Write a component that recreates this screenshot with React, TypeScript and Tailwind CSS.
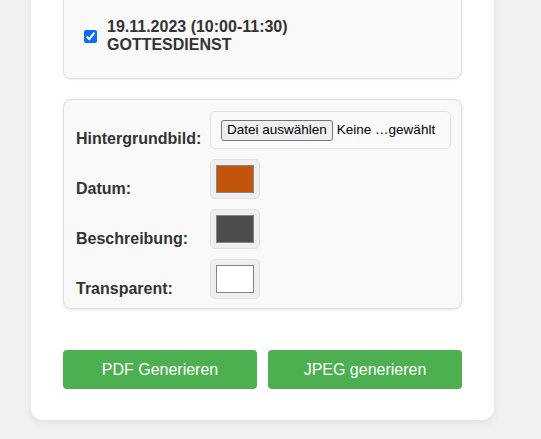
import React from 'react'

const font = { fontFamily: '"Liberation Sans", Arial, sans-serif' }

interface SwatchProps {
    color: string
}

function ColorSwatch({ color }: SwatchProps) {
    return (
        <div className="w-[50px] h-[40px] p-[5px] bg-[#efefef] border border-[#e2e2e2] rounded-[5px]">
            <div className={`w-full h-full border border-[#858585] ${color}`}></div>
        </div>
    )
}

const rows = [
    { label: 'Datum:', color: 'bg-[#c2540c]' },
    { label: 'Beschreibung:', color: 'bg-[#4d4d4d]' },
    { label: 'Transparent:', color: 'bg-white' },
]

export default function App() {
    return (
        <div className="w-[541px] h-[439px] overflow-hidden bg-[#f0f1f1] text-[#333]" style={font}>
            <div className="ml-[31px] w-[463px] -mt-[60px] bg-white rounded-xl shadow-[0_2px_8px_rgba(0,0,0,0.08)] px-8 pt-8 pb-[31px]">
                {/* Event list */}
                <div className="bg-[#f9f9f9] border border-[#dedede] rounded-lg shadow-[0_1px_2px_rgba(0,0,0,0.06)] pl-5 pr-5 pt-[45px] pb-[24px]">
                    <label className="flex items-center gap-[10px]">
                        <input type="checkbox" checked readOnly className="w-[13px] h-[13px] accent-[#0a6cff]" />
                        <span className="text-base font-bold leading-[18px]">
                            19.11.2023 (10:00-11:30)
                            <br />
                            GOTTESDIENST
                        </span>
                    </label>
                </div>

                {/* Settings */}
                <div className="mt-[20px] w-[399px] bg-[#f9f9f9] border border-[#dedede] rounded-lg shadow-[0_1px_3px_rgba(0,0,0,0.1)] pl-3 pr-[10px] pt-[11px] pb-[9px]">
                    <div className="flex items-end">
                        <div className="w-[134px] shrink-0 text-base font-bold leading-[18px] pb-[1px]">Hintergrundbild:</div>
                        <div className="flex-1 min-w-0 overflow-hidden h-[38px] flex items-center gap-[4px] whitespace-nowrap bg-[#fafafa] border border-[#e2e2e2] rounded-[5px] pl-[10px] pr-[6px] text-[13.5px]">
                            <span className="h-[21px] px-[5px] flex items-center bg-[#efefef] border border-[#767676] rounded-[3px] text-black leading-none">
                                Datei auswählen
                            </span>
                            <span className="text-black">Keine …gewählt</span>
                        </div>
                    </div>
                    {rows.map((row, i) => (
                        <div key={i} className="flex items-end mt-[10px]">
                            <div className="w-[134px] shrink-0 text-base font-bold leading-[18px] pb-[1px]">{row.label}</div>
                            <ColorSwatch color={row.color} />
                        </div>
                    ))}
                </div>

                {/* Actions */}
                <div className="mt-[41px] flex gap-[11px]">
                    <button className="w-[194px] h-[39px] bg-[#4caf50] text-white text-base rounded">PDF Generieren</button>
                    <button className="w-[194px] h-[39px] bg-[#4caf50] text-white text-base rounded">JPEG generieren</button>
                </div>
            </div>
        </div>
    )
}
